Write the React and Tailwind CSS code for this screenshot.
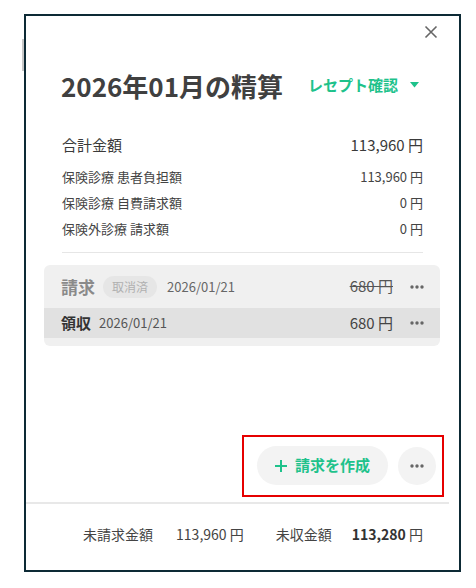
const font = { fontFamily: '"Noto Sans CJK JP", "Noto Sans", sans-serif' };

function Dots({ className = "" }) {
  return (
    <svg width="14" height="4" viewBox="0 0 14 4" className={className}>
      <circle cx="2" cy="2" r="1.7" fill="currentColor" />
      <circle cx="7" cy="2" r="1.7" fill="currentColor" />
      <circle cx="12" cy="2" r="1.7" fill="currentColor" />
    </svg>
  );
}

function Row({ label, value, big }) {
  return (
    <div
      className={
        big
          ? "flex h-[24px] items-center justify-between text-[15px] text-[#3a3a3a]"
          : "flex h-[26px] items-center justify-between text-[13px] text-[#444]"
      }
    >
      <span>{label}</span>
      <span>{value}</span>
    </div>
  );
}

export default function App() {
  return (
    <div className="relative h-[588px] w-[476px] bg-white" style={font}>
      <div className="absolute left-[22px] top-[25px] h-[32px] w-[2px] bg-[#c8c8c8]" />
      <div className="ml-[24px] mt-[14px] flex h-[558px] w-[437px] flex-col border-2 border-[#0d2a35]">
        <div className="flex h-[34px] items-start justify-end pr-[21px] pt-[9px]">
          <button type="button" aria-label="close" className="text-[#666]">
            <svg width="14" height="14" viewBox="0 0 14 14">
              <path d="M1.5 1.5 L12.5 12.5 M12.5 1.5 L1.5 12.5" stroke="currentColor" strokeWidth="1.6" />
            </svg>
          </button>
        </div>

        <div className="mt-[18px] flex h-[34px] items-center gap-[25px] pl-[35px]">
          <h1 className="text-[26px] font-bold text-[#404040]">2026年01月の精算</h1>
          <div className="flex items-center gap-[12px] text-[15px] font-bold text-[#1ec28b]">
            <span>レセプト確認</span>
            <svg width="9" height="6" viewBox="0 0 9 6">
              <path d="M0 0 H9 L4.5 5.5 Z" fill="currentColor" />
            </svg>
          </div>
        </div>

        <div className="mt-[31px] px-[36px]">
          <Row big label="合計金額" value="113,960 円" />
          <div className="mt-[7px]">
            <Row label="保険診療 患者負担額" value="113,960 円" />
            <Row label="保険診療 自費請求額" value="0 円" />
            <Row label="保険外診療 請求額" value="0 円" />
          </div>
          <div className="mt-[10px] h-px bg-[#e6e6e6]" />
        </div>

        <div className="ml-[18px] mr-[19px] mt-[12px] rounded-[6px] bg-[#f0f0f0] pb-[8px]">
          <div className="flex h-[43px] items-center pl-[17px] pr-[16px]">
            <span className="text-[17px] font-bold text-[#8a8a8a]">請求</span>
            <span className="ml-[8px] rounded-full bg-[#e6e6e6] px-[9px] py-[2px] text-[12px] text-[#b0b0b0]">取消済</span>
            <span className="ml-[10px] text-[13px] text-[#666]">2026/01/21</span>
            <span className="ml-auto text-[15px] text-[#555] line-through">680 円</span>
            <Dots className="ml-[17px] text-[#666]" />
          </div>
          <div className="flex h-[30px] items-center bg-[#e1e1e1] pl-[17px] pr-[16px]">
            <span className="text-[15px] font-bold text-[#333]">領収</span>
            <span className="ml-[8px] text-[13px] text-[#555]">2026/01/21</span>
            <span className="ml-auto text-[15px] text-[#444]">680 円</span>
            <Dots className="ml-[17px] text-[#666]" />
          </div>
        </div>

        <div className="flex-1" />

        <div className="mb-[5px] mr-[15px] flex justify-end">
          <div className="flex items-center gap-[10px] border-2 border-[#e60000] pb-[10px] pl-[13px] pr-[6px] pt-[9px]">
            <button
              type="button"
              className="flex h-[39px] w-[131px] items-center justify-center gap-[8px] rounded-full bg-[#f3f3f3] text-[15px] font-bold text-[#1ec28b]"
            >
              <svg width="12" height="12" viewBox="0 0 12 12">
                <path d="M6 0 V12 M0 6 H12" stroke="currentColor" strokeWidth="2" />
              </svg>
              請求を作成
            </button>
            <button type="button" className="flex h-[38px] w-[38px] items-center justify-center rounded-full bg-[#f3f3f3] text-[#666]">
              <Dots />
            </button>
          </div>
        </div>

        <div className="mr-[10px] h-[2px] bg-[#e8e8e8]" />

        <div className="flex h-[66px] items-start justify-end pr-[36px] pt-[20px] text-[14px] text-[#444]">
          <span>未請求金額</span>
          <span className="ml-[23px]">113,960 円</span>
          <span className="ml-[32px]">未収金額</span>
          <span className="ml-[20px]">
            <b className="font-bold text-[#333]">113,280</b> 円
          </span>
        </div>
      </div>
    </div>
  );
}
